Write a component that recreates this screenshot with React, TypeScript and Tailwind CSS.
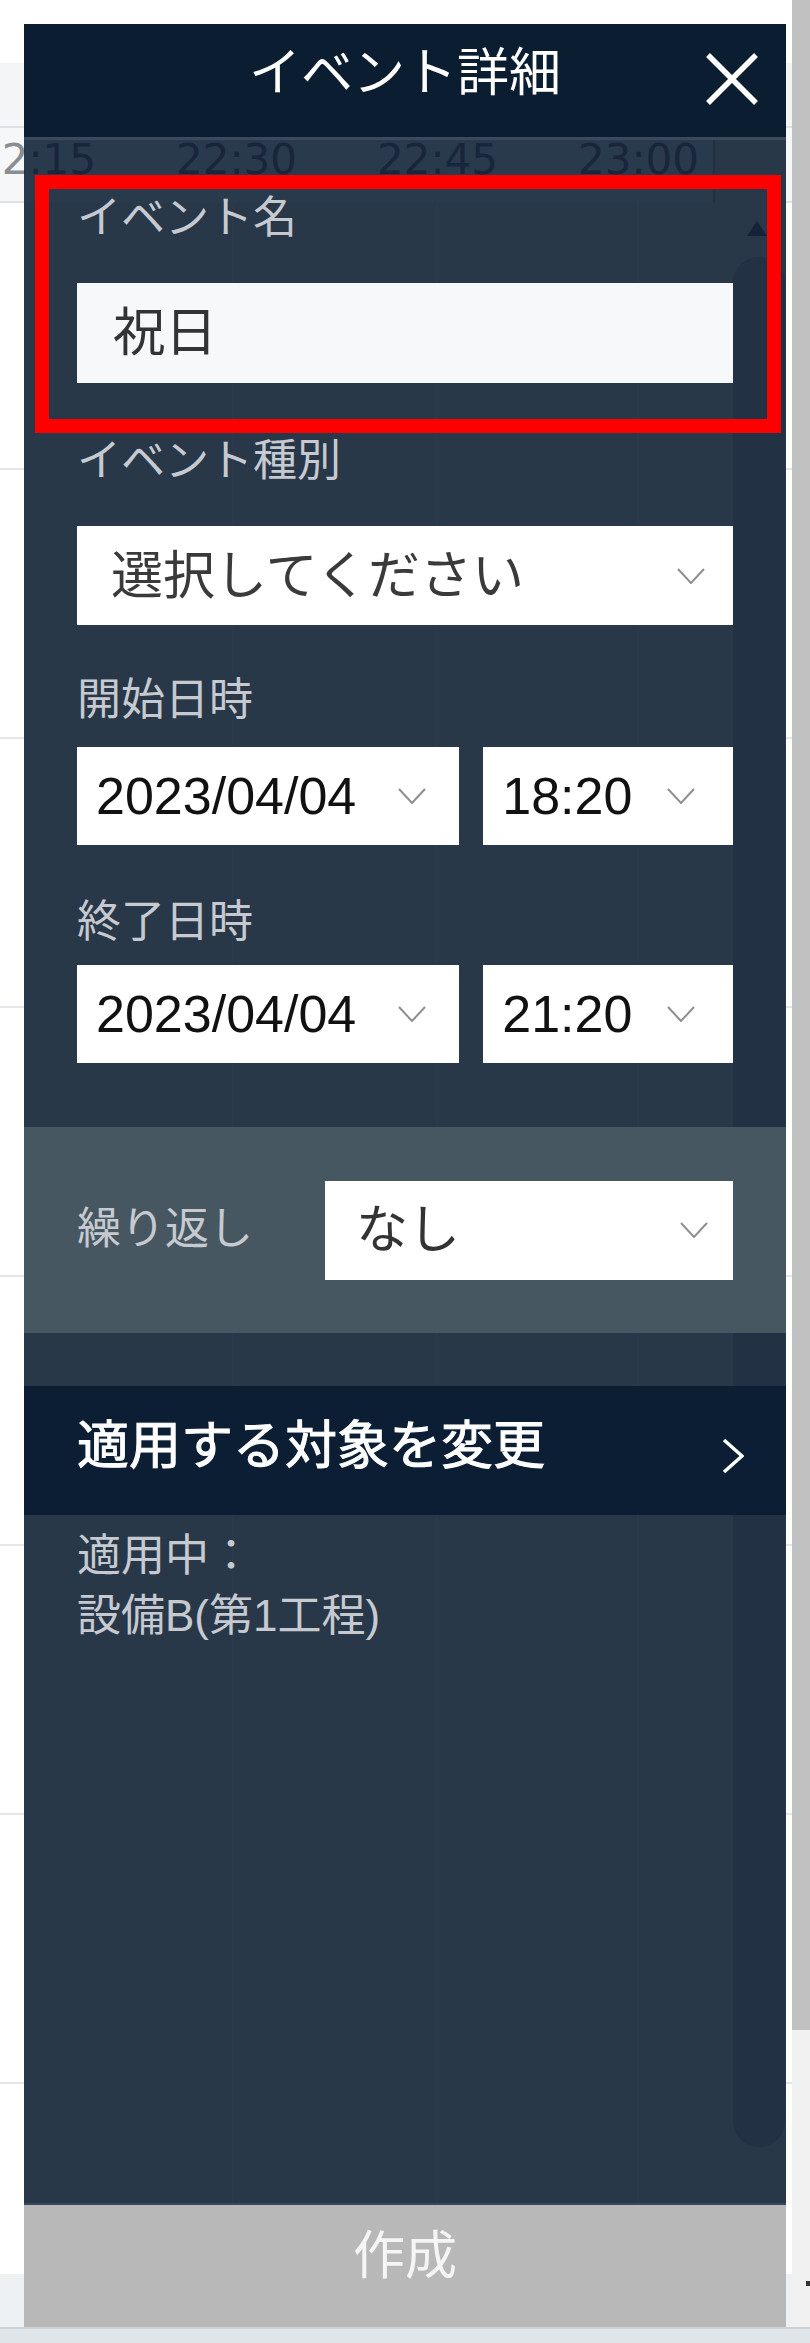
import React from "react";

const Chevron = () => (
  <svg width="28" height="16" viewBox="0 0 28 16" className="shrink-0">
    <path d="M1 1 L14 15 L27 1" fill="none" stroke="#8f8f8f" strokeWidth="2" />
  </svg>
);

const Label = ({ children, className = "" }: { children: React.ReactNode; className?: string }) => (
  <div className={`text-[44px] leading-[60px] text-[#c6cad0] ${className}`}>{children}</div>
);

const timeLabels = ["22:15", "22:30", "22:45", "23:00"];

export default function App() {
  return (
    <div className="relative h-[2343px] w-[810px] overflow-hidden bg-white font-['Liberation_Sans','Noto_Sans_CJK_JP',sans-serif]">
      <div className="flex h-[2327px]">
        {/* underlying page */}
        <div className="relative flex w-[792px] shrink-0 flex-col">
          <div className="h-[63px] shrink-0" />
          <div className="h-[65px] shrink-0 border-b-2 border-[#dde2e7] bg-[#f3f5f7]" />
          <div className="h-[75px] shrink-0 border-b-2 border-[#dde2e7] bg-[#f6f7f9]">
            <div className="h-full w-[24px] overflow-hidden">
              <div className="ml-[-25px] mt-[7px] w-[100px] font-['DejaVu_Sans'] text-[42px] leading-[49px] text-[#8a8e93]">
                22:15
              </div>
            </div>
          </div>
          <div className="h-[267px] shrink-0 border-b-2 border-[#e3e7eb]" />
          <div className="h-[269px] shrink-0 border-b-2 border-[#e3e7eb]" />
          <div className="h-[269px] shrink-0 border-b-2 border-[#e3e7eb]" />
          <div className="h-[269px] shrink-0 border-b-2 border-[#e3e7eb]" />
          <div className="h-[269px] shrink-0 border-b-2 border-[#e3e7eb]" />
          <div className="h-[269px] shrink-0 border-b-2 border-[#e3e7eb]" />
          <div className="h-[269px] shrink-0 border-b-2 border-[#e3e7eb]" />
          <div className="flex-1" />
          <div className="h-[53px] shrink-0 bg-[#eef1f3]" />

          {/* event detail drawer (overlay) */}
          <div className="absolute left-[24px] top-[24px] z-10 flex h-[2303px] w-[762px] flex-col bg-[#283849]">
            <header className="grid h-[116px] shrink-0 grid-cols-[81px_1fr_81px] items-center border-b-[3px] border-[#3b4b5d] bg-[#0b1d30]">
              <div />
              <h1 className="pb-[16px] text-center text-[52px] leading-none text-white">イベント詳細</h1>
              <div className="flex pb-[4px]">
                <svg width="54" height="54" viewBox="0 0 54 54">
                  <path d="M3 3 L51 51 M51 3 L3 51" stroke="white" strokeWidth="5.5" fill="none" />
                </svg>
              </div>
            </header>

            <div className="relative flex-1">
              {/* timeline header seen through the drawer */}
              <div className="absolute left-0 top-0 h-[63px] w-[691px] overflow-hidden border-r-2 border-[#223142] bg-[#293a4c]">
                <div className="ml-[-49px] mt-[-5px] flex font-['DejaVu_Sans'] text-[42px] leading-[49px] text-[#18253a]">
                  {timeLabels.map((l) => (
                    <div key={l} className="w-[201px] shrink-0">
                      {l}
                    </div>
                  ))}
                </div>
              </div>
              <div className="absolute bottom-0 left-[208px] top-[63px] w-[2px] bg-[#2a3a4c]" />
              <div className="absolute bottom-0 left-[412px] top-[63px] w-[2px] bg-[#2a3a4c]" />
              <div className="absolute bottom-0 left-[613px] top-[63px] w-[2px] bg-[#2a3a4c]" />

              {/* inner scroll track */}
              <svg width="20" height="15" viewBox="0 0 20 15" className="absolute left-[723px] top-[81px]">
                <path d="M10 0 L20 15 L0 15 Z" fill="#14233a" />
              </svg>
              <div className="absolute bottom-[56px] left-[709px] top-[117px] w-[52px] rounded-full bg-[#223144]" />

              <div className="relative flex flex-col">
                <div className="flex flex-col px-[53px] pt-[48px]">
                  <Label>イベント名</Label>
                  <div className="mt-[35px] flex h-[100px] w-[656px] items-center bg-[#f7f8fa] pl-[36px] text-[52px] text-[#333]">
                    祝日
                  </div>

                  <Label className="mt-[48px]">イベント種別</Label>
                  <div className="mt-[35px] flex h-[99px] w-[656px] items-center justify-between bg-white pl-[34px] pr-[28px] text-[52px] text-[#3a3a3a]">
                    <span>選択してください</span>
                    <Chevron />
                  </div>

                  <Label className="mt-[45px]">開始日時</Label>
                  <div className="mt-[17px] flex h-[98px] gap-[24px]">
                    <div className="flex w-[386px] items-center justify-between bg-white pl-[19px] pr-[33px] text-[52px] text-[#111]">
                      <span>2023/04/04</span>
                      <Chevron />
                    </div>
                    <div className="flex w-[252px] items-center justify-between bg-white pl-[19px] pr-[38px] text-[52px] text-[#111]">
                      <span>18:20</span>
                      <Chevron />
                    </div>
                  </div>

                  <Label className="mt-[47px]">終了日時</Label>
                  <div className="mt-[13px] flex h-[98px] gap-[24px]">
                    <div className="flex w-[386px] items-center justify-between bg-white pl-[19px] pr-[33px] text-[52px] text-[#111]">
                      <span>2023/04/04</span>
                      <Chevron />
                    </div>
                    <div className="flex w-[252px] items-center justify-between bg-white pl-[19px] pr-[38px] text-[52px] text-[#111]">
                      <span>21:20</span>
                      <Chevron />
                    </div>
                  </div>
                </div>

                <div className="mt-[64px] flex h-[206px] items-center bg-[#475761] px-[53px]">
                  <Label className="w-[248px] shrink-0 pb-[2px]">繰り返し</Label>
                  <div className="flex h-[99px] w-[408px] items-center justify-between bg-white pl-[31px] pr-[25px] text-[52px] text-[#333]">
                    <span>なし</span>
                    <Chevron />
                  </div>
                </div>

                <div className="mt-[53px] flex h-[129px] items-center justify-between bg-[#0b1e33] pl-[53px] pr-[42px]">
                  <span className="pb-[10px] text-[52px] leading-none text-white [-webkit-text-stroke:1px_white]">適用する対象を変更</span>
                  <svg width="22" height="36" viewBox="0 0 22 36" className="mt-[10px]">
                    <path d="M2 2 L20 18 L2 34" fill="none" stroke="white" strokeWidth="3.5" />
                  </svg>
                </div>

                <div className="px-[53px] pt-[11px]">
                  <Label>適用中：</Label>
                  <Label>設備B(第1工程)</Label>
                </div>
              </div>
            </div>

            <button className="flex h-[124px] shrink-0 items-center justify-center border-t-2 border-[#3a4857] bg-[#b8b8b8] pb-[20px] text-[52px] leading-none text-[#f5f5f5]">
              作成
            </button>
          </div>
        </div>

        {/* page scrollbar */}
        <div className="flex w-[18px] shrink-0 flex-col">
          <div className="h-[2030px] bg-[#c1c1c1]" />
          <div className="relative flex-1 bg-[#f1f1f1]">
            <div className="absolute left-[14px] top-[251px] h-[5px] w-[4px] bg-[#333]" />
          </div>
        </div>
      </div>
      <div className="h-[16px] border-t-2 border-[#ccd3d8] bg-[#dfe5e9]" />

      {/* red annotation frame */}
      <div className="absolute left-[35px] top-[175px] z-20 h-[258px] w-[746px] border-[14px] border-[#ff0000]" />
    </div>
  );
}
